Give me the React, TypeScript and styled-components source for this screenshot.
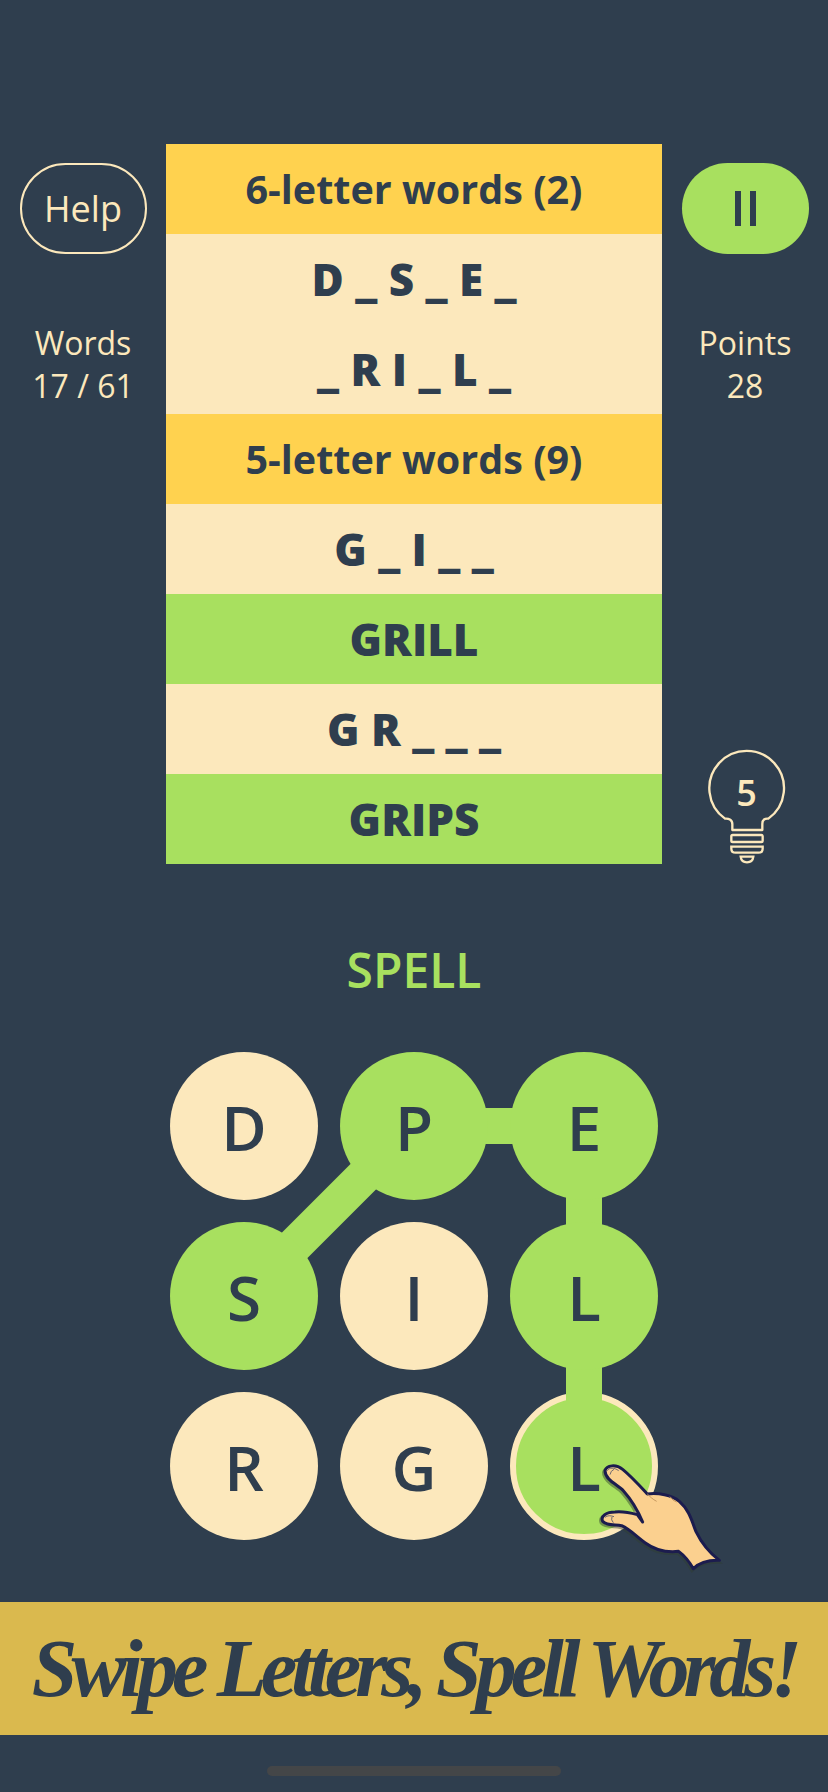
import styled, { createGlobalStyle } from 'styled-components';

const COLORS = {
  bg: '#2f3e4e',
  yellow: '#ffd24f',
  cream: '#fce8bc',
  green: '#a8e05f',
  banner: '#dab94e',
};

const GlobalStyle = createGlobalStyle`
  html, body {
    margin: 0;
    padding: 0;
    background: ${COLORS.bg};
  }
`;

type Tone = 'header' | 'hidden' | 'found';

const ROWS: { text: string; tone: Tone }[] = [
  { text: '6-letter words (2)', tone: 'header' },
  { text: 'D _ S _ E _', tone: 'hidden' },
  { text: '_ R I _ L _', tone: 'hidden' },
  { text: '5-letter words (9)', tone: 'header' },
  { text: 'G _ I _ _', tone: 'hidden' },
  { text: 'GRILL', tone: 'found' },
  { text: 'G R _ _ _', tone: 'hidden' },
  { text: 'GRIPS', tone: 'found' },
];

const TILES = [
  { letter: 'D', on: false },
  { letter: 'P', on: true },
  { letter: 'E', on: true },
  { letter: 'S', on: true },
  { letter: 'I', on: false },
  { letter: 'L', on: true },
  { letter: 'R', on: false },
  { letter: 'G', on: false },
  { letter: 'L', on: true, active: true },
];

const Bulb = () => (
  <BulbWrap>
    <svg width="84" height="116" viewBox="130 84 252 348" fill="none" stroke={COLORS.cream} strokeWidth="7">
      <path d="M212 330 V312 C212 298 200 295 190 296 A112 112 0 1 1 320 296 C310 295 302 298 302 312 V330 Z" strokeLinejoin="round" />
      <rect x="209" y="345" width="94" height="21" rx="4" />
      <path d="M209 380 H303 V386 Q303 398 290 398 H222 Q209 398 209 386 Z" />
      <path d="M237 410 H275 Q273 427 256 427 Q239 427 237 410 Z" />
    </svg>
    <BulbCount>5</BulbCount>
  </BulbWrap>
);

const HAND_OUTLINE =
  'M345 272 C350 255 378 252 398 268 C425 290 450 318 472 342 C505 338 545 345 568 364 C598 390 606 425 618 455 C635 490 660 520 688 541 C655 540 628 548 610 566 C598 545 585 528 566 514 C530 518 495 510 465 488 C440 470 420 448 395 437 C375 433 350 438 338 424 C330 408 350 396 375 396 C395 394 420 398 442 404 L458 426 C445 395 425 360 400 332 C385 315 345 300 345 272 Z';

const Hand = () => (
  <HandLayer width="250" height="210" viewBox="0 0 750 630">
    <path d={HAND_OUTLINE} transform="translate(-4 5)" fill="#2f3e30" opacity="0.45" stroke="#2f3e30" strokeWidth="10" />
    <path d={HAND_OUTLINE} fill="#fbd08f" stroke="#1c1c4e" strokeWidth="9" strokeLinejoin="round" />
    <path d="M352 272 C358 262 372 262 386 272 M372 268 Q362 272 360 284" fill="none" stroke="#6e6a70" strokeWidth="3" />
    <path d="M345 412 C352 406 362 406 372 410 M366 410 Q362 420 370 428" fill="none" stroke="#6e6a70" strokeWidth="3" />
    <path d="M472 342 C480 350 488 358 500 364 M540 350 Q548 362 560 366" fill="none" stroke="#c89a60" strokeWidth="3" />
  </HandLayer>
);

export default function App() {
  return (
    <Page>
      <GlobalStyle />
      <Top>
        <SideColumn>
          <HelpButton>Help</HelpButton>
          <Stat>
            <div>Words</div>
            <div>17 / 61</div>
          </Stat>
        </SideColumn>
        <WordList>
          {ROWS.map((row) => (
            <WordRow key={row.text} $tone={row.tone}>
              {row.text}
            </WordRow>
          ))}
        </WordList>
        <SideColumn>
          <PauseButton aria-label="Pause">
            <PauseBar />
            <PauseBar />
          </PauseButton>
          <Stat>
            <div>Points</div>
            <div>28</div>
          </Stat>
          <Bulb />
        </SideColumn>
      </Top>
      <CurrentWord>SPELL</CurrentWord>
      <Board>
        <Links width="488" height="488" viewBox="0 0 488 488">
          <line x1="244" y1="74" x2="414" y2="74" />
          <line x1="244" y1="74" x2="74" y2="244" />
          <line x1="414" y1="74" x2="414" y2="414" />
        </Links>
        {TILES.map((tile, i) => (
          <Tile key={i} $on={tile.on} $active={!!tile.active}>
            {tile.letter}
          </Tile>
        ))}
        <Hand />
      </Board>
      <Banner>Swipe Letters, Spell Words!</Banner>
      <HomeIndicator />
    </Page>
  );
}

const Page = styled.div`
  width: 828px;
  height: 1792px;
  overflow: hidden;
  display: flex;
  flex-direction: column;
  align-items: center;
  padding-top: 144px;
  box-sizing: border-box;
  background: ${COLORS.bg};
  font-family: 'Open Sans', sans-serif;
  color: ${COLORS.bg};
`;

const Top = styled.div`
  width: 100%;
  display: grid;
  grid-template-columns: 166px 496px 166px;
`;

const SideColumn = styled.div`
  display: flex;
  flex-direction: column;
  align-items: center;
  padding-top: 19px;
`;

const HelpButton = styled.div`
  width: 127px;
  height: 91px;
  box-sizing: border-box;
  border: 2px solid ${COLORS.cream};
  border-radius: 46px;
  display: flex;
  align-items: center;
  justify-content: center;
  font-size: 36px;
  font-weight: 500;
  color: ${COLORS.cream};
`;

const PauseButton = styled.div`
  width: 127px;
  height: 91px;
  border-radius: 46px;
  background: ${COLORS.green};
  display: flex;
  align-items: center;
  justify-content: center;
  gap: 9px;
`;

const PauseBar = styled.span`
  width: 6px;
  height: 35px;
  background: ${COLORS.bg};
`;

const Stat = styled.div`
  margin-top: 67px;
  font-size: 32px;
  line-height: 43px;
  font-weight: 500;
  text-align: center;
  color: ${COLORS.cream};
`;

const WordList = styled.div`
  display: flex;
  flex-direction: column;
`;

const WordRow = styled.div<{ $tone: Tone }>`
  height: 90px;
  display: flex;
  align-items: center;
  justify-content: center;
  font-size: ${(p) => (p.$tone === 'header' ? 39.5 : 44)}px;
  font-weight: ${(p) => (p.$tone === 'header' ? 700 : 800)};
  white-space: pre;
  background: ${(p) =>
    p.$tone === 'header' ? COLORS.yellow : p.$tone === 'found' ? COLORS.green : COLORS.cream};
`;

const BulbWrap = styled.div`
  position: relative;
  margin-top: auto;
  margin-left: 3px;
  height: 116px;
  line-height: 0;
`;

const BulbCount = styled.span`
  position: absolute;
  left: 0;
  right: 0;
  top: 23px;
  text-align: center;
  font-size: 36px;
  line-height: 44px;
  font-weight: 600;
  color: ${COLORS.cream};
`;

const CurrentWord = styled.div`
  margin-top: 76px;
  height: 112px;
  line-height: 60px;
  font-size: 48px;
  font-weight: 600;
  color: ${COLORS.green};
`;

const Board = styled.div`
  position: relative;
  display: grid;
  grid-template-columns: repeat(3, 148px);
  grid-auto-rows: 148px;
  gap: 22px;
`;

const Links = styled.svg`
  position: absolute;
  left: 0;
  top: 0;
  stroke: ${COLORS.green};
  stroke-width: 36;
`;

const Tile = styled.div<{ $on: boolean; $active: boolean }>`
  position: relative;
  border-radius: 50%;
  box-sizing: border-box;
  display: flex;
  align-items: center;
  justify-content: center;
  padding-top: 2px;
  font-size: 62px;
  font-weight: 600;
  background: ${(p) => (p.$on ? COLORS.green : COLORS.cream)};
  border: ${(p) => (p.$active ? `6px solid ${COLORS.cream}` : 'none')};

  /* the link from the tile above runs over the ring of the active tile */
  &::before {
    content: '';
    display: ${(p) => (p.$active ? 'block' : 'none')};
    position: absolute;
    top: -8px;
    left: 50%;
    width: 36px;
    height: 12px;
    margin-left: -18px;
    background: ${COLORS.green};
  }
`;

const HandLayer = styled.svg`
  position: absolute;
  left: 320px;
  top: 328px;
`;

const Banner = styled.div`
  margin-top: 62px;
  width: 100%;
  height: 133px;
  flex: none;
  display: flex;
  align-items: center;
  justify-content: center;
  background: ${COLORS.banner};
  font-family: 'Liberation Serif', serif;
  font-style: italic;
  font-weight: 700;
  font-size: 82px;
  letter-spacing: -6px;
  white-space: nowrap;
`;

const HomeIndicator = styled.div`
  margin-top: 31px;
  width: 294px;
  height: 10px;
  flex: none;
  border-radius: 5px;
  background: #444648;
`;
